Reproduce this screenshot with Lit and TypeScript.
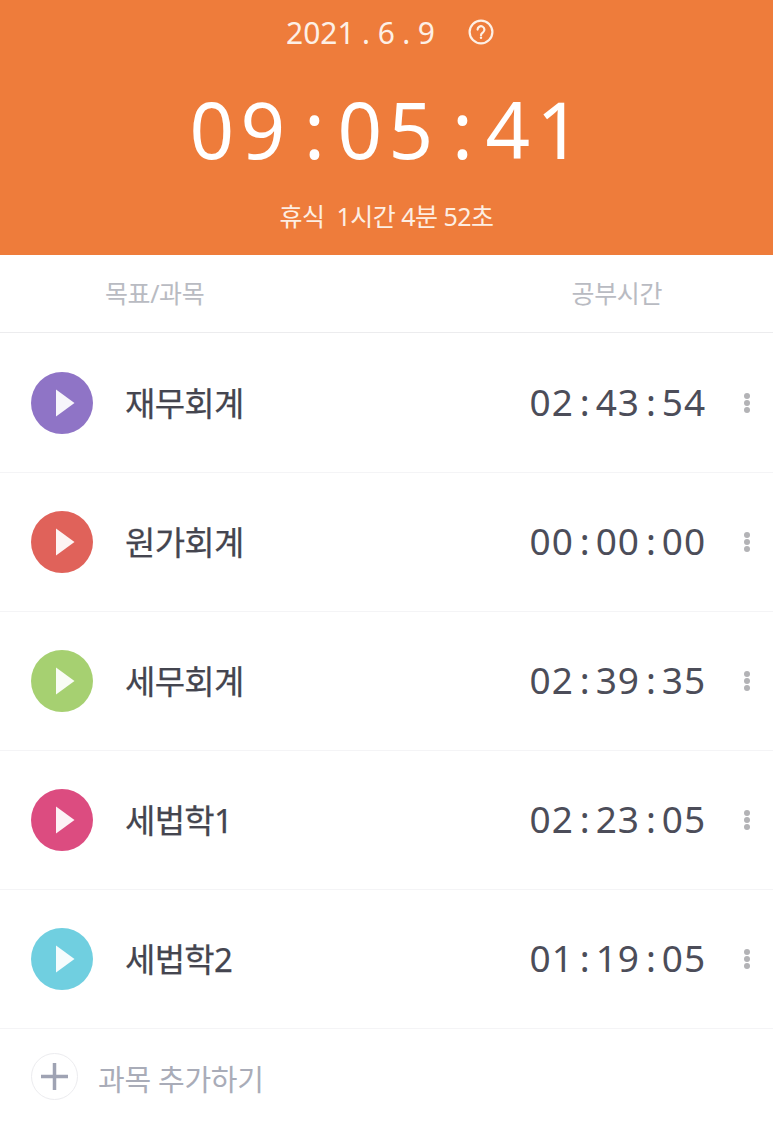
import {LitElement, html, css} from 'lit';
import {customElement} from 'lit/decorators.js';

const subjects = [
  {name: '재무회계', color: '#8f74c6', time: ['02', '43', '54']},
  {name: '원가회계', color: '#e0625a', time: ['00', '00', '00']},
  {name: '세무회계', color: '#a6d071', time: ['02', '39', '35']},
  {name: '세법학1', color: '#dc4c80', time: ['02', '23', '05']},
  {name: '세법학2', color: '#70cfe0', time: ['01', '19', '05']},
];

@customElement('app-root')
export class AppRoot extends LitElement {
  static styles = css`
    :host {
      display: block;
      width: 773px;
      height: 1134px;
      overflow: hidden;
      background: #fff;
      font-family: "Noto Sans", "Noto Sans CJK KR", sans-serif;
    }
    /* orange timer block */
    .top {
      height: 255px;
      box-sizing: border-box;
      background: #ee7c3b;
      color: #fff;
      display: flex;
      flex-direction: column;
      align-items: center;
    }
    .date {
      height: 64px;
      display: flex;
      align-items: center;
      gap: 33px;
      font-size: 30px;
      color: #fdf0e6;
      padding-left: 7px;
    }
    .date .txt {
      display: flex;
    }
    .date .dot {
      width: 23px;
      text-align: center;
    }
    .date svg {
      display: block;
    }
    .clock {
      height: 126px;
      box-sizing: border-box;
      padding: 4px 0 0 4px;
      display: flex;
      align-items: center;
      font-size: 78px;
      letter-spacing: 6.4px;
      line-height: 1;
    }
    .clock .colon {
      width: 46px;
      text-align: center;
      letter-spacing: 0;
    }
    .rest {
      height: 50px;
      display: flex;
      align-items: center;
      font-size: 25px;
      letter-spacing: -0.5px;
      color: #fdeee3;
      white-space: pre;
    }
    /* column titles */
    .head {
      height: 78px;
      box-sizing: border-box;
      border-bottom: 1px solid #ececee;
      display: flex;
      align-items: center;
      padding-bottom: 3px;
      font-size: 25px;
      letter-spacing: -0.4px;
      color: #b9bbc2;
    }
    .head .a {
      margin-left: 105px;
    }
    .head .b {
      margin-left: auto;
      margin-right: 111px;
    }
    /* subject rows */
    .list {
      padding-top: 1px;
    }
    .row {
      height: 139px;
      box-sizing: border-box;
      border-bottom: 1px solid #f4f4f6;
      display: flex;
      align-items: center;
      padding: 0 0 1px 31px;
    }
    .play {
      width: 62px;
      height: 62px;
      border-radius: 50%;
      display: flex;
      align-items: center;
      justify-content: center;
      flex: none;
    }
    .play svg {
      margin-left: 6px;
    }
    .name {
      margin-left: 32px;
      padding-bottom: 2px;
      font-size: 33px;
      letter-spacing: -0.7px;
      color: #44454f;
      -webkit-text-stroke: 0.25px #44454f;
    }
    .time {
      margin-left: auto;
      padding-bottom: 2px;
      display: flex;
      align-items: center;
      font-size: 37px;
      letter-spacing: 0.9px;
      color: #4c4d59;
    }
    .time .colon {
      width: 22px;
      text-align: center;
      letter-spacing: 0;
    }
    .more {
      width: 6px;
      margin: 0 23px 0 38px;
      display: flex;
      flex-direction: column;
      gap: 1px;
    }
    .more i {
      display: block;
      width: 6px;
      height: 6px;
      border-radius: 50%;
      background: #b3b3b6;
    }
    /* add subject */
    .add {
      height: 98px;
      box-sizing: border-box;
      display: flex;
      align-items: center;
      padding: 0 0 4px 31px;
      font-size: 29px;
      letter-spacing: -0.3px;
      color: #a9acb8;
    }
    .add span {
      padding-top: 3px;
    }
    .plus {
      width: 47px;
      height: 47px;
      box-sizing: border-box;
      border: 1px solid #ececef;
      border-radius: 50%;
      display: flex;
      align-items: center;
      justify-content: center;
      margin-right: 20px;
    }
  `;

  renderTime(parts: string[]) {
    return parts.map((p, i) => html`${i > 0 ? html`<span class="colon">:</span>` : ''}<span>${p}</span>`);
  }

  render() {
    return html`
      <div class="top">
        <div class="date">
          <div class="txt"><span>2021</span><span class="dot">.</span><span>6</span><span class="dot">.</span><span>9</span></div>
          <svg width="26" height="26" viewBox="0 0 26 26" fill="none" stroke="#fdf0e6" stroke-width="2.2">
            <circle cx="13" cy="13" r="11.4"></circle>
            <path d="M9.6 10.6a3.4 3.4 0 1 1 5.4 2.8c-1.3.9-2 1.4-2 2.8" stroke-linecap="round"></path>
            <circle cx="13" cy="18.8" r="1.2" fill="#fdf0e6" stroke="none"></circle>
          </svg>
        </div>
        <div class="clock">${this.renderTime(['09', '05', '41'])}</div>
        <div class="rest">휴식  1시간 4분 52초</div>
      </div>
      <div class="head">
        <span class="a">목표/과목</span>
        <span class="b">공부시간</span>
      </div>
      <div class="list">
        ${subjects.map(s => html`
          <div class="row">
            <div class="play" style="background:${s.color}">
              <svg width="20" height="28" viewBox="0 0 20 28">
                <path d="M1 0.5 L19.5 14 L1 27.5 Z" fill="#fff" fill-opacity="0.93"></path>
              </svg>
            </div>
            <div class="name">${s.name}</div>
            <div class="time">${this.renderTime(s.time)}</div>
            <div class="more"><i></i><i></i><i></i></div>
          </div>
        `)}
      </div>
      <div class="add">
        <div class="plus">
          <svg width="27" height="27" viewBox="0 0 27 27" stroke="#9fa3b3" stroke-width="3.5">
            <path d="M0 13.5H27M13.5 0V27"></path>
          </svg>
        </div>
        <span>과목 추가하기</span>
      </div>
    `;
  }
}
